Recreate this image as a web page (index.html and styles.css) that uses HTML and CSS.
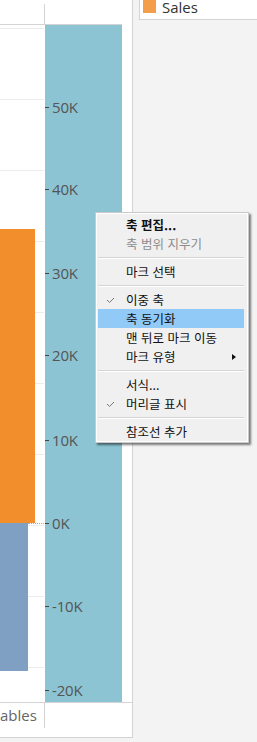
FILE: index.html
```html
<!DOCTYPE html>
<html lang="ko">
<head>
    <meta charset="UTF-8">
    <title>Dual axis sheet</title>
    <link rel="stylesheet" href="styles.css">
</head>
<body>

    <div class="page">
        <!-- worksheet -->
        <div class="sheet">
            <div class="head">
                <div class="head-left"></div>
                <div class="head-right"></div>
            </div>
            <div class="rule-top"></div>

            <div class="plot">
                <div class="pane">
                    <div class="bar bar-sales" style="top: 204px; height: 294px;"></div>
                    <div class="bar bar-profit" style="top: 498px; height: 148px;"></div>
                    <div class="zero-line" style="top: 498px;"></div>
                </div>
                <div class="gap"></div>
                <div class="axis">
                    <div class="tick" style="top: 82px;"><span class="tick-mark"></span>50K</div>
                    <div class="tick" style="top: 164px;"><span class="tick-mark"></span>40K</div>
                    <div class="tick" style="top: 248px;"><span class="tick-mark"></span>30K</div>
                    <div class="tick" style="top: 330px;"><span class="tick-mark"></span>20K</div>
                    <div class="tick" style="top: 415px;"><span class="tick-mark"></span>10K</div>
                    <div class="tick" style="top: 498px;"><span class="tick-mark"></span>0K</div>
                    <div class="tick" style="top: 581px;"><span class="tick-mark"></span>-10K</div>
                    <div class="tick" style="top: 665px;"><span class="tick-mark"></span>-20K</div>
                </div>
            </div>

            <div class="rule-bottom"></div>
            <div class="foot">
                <div class="foot-left">ables</div>
                <div class="foot-right"></div>
            </div>
        </div>

        <!-- legend -->
        <div class="side">
            <div class="legend">
                <span class="swatch"></span>
                <span class="legend-text">Sales</span>
            </div>
        </div>
    </div>

    <!-- context menu -->
    <div class="menu">
        <div class="item bold">축 편집...</div>
        <div class="item disabled">축 범위 지우기</div>
        <div class="sep"></div>
        <div class="item">마크 선택</div>
        <div class="sep"></div>
        <div class="item">
            <svg class="check" width="9" height="7" viewBox="0 0 9 7"><polyline points="1,3 3.5,5.5 8,1" fill="none" stroke="#777" stroke-width="1"/></svg>
            이중 축
        </div>
        <div class="item active">축 동기화</div>
        <div class="item">맨 뒤로 마크 이동</div>
        <div class="item">마크 유형<span class="arrow"></span></div>
        <div class="sep"></div>
        <div class="item">서식...</div>
        <div class="item">
            <svg class="check" width="9" height="7" viewBox="0 0 9 7"><polyline points="1,3 3.5,5.5 8,1" fill="none" stroke="#777" stroke-width="1"/></svg>
            머리글 표시
        </div>
        <div class="sep"></div>
        <div class="item">참조선 추가</div>
    </div>

</body>
</html>
```

FILE: styles.css
```css
body {
    margin: 0;
    background-color: #f3f3f3;
    font-family: "Open Sans", "Noto Sans", sans-serif;
    width: 257px;
    height: 742px;
    overflow: hidden;
    position: relative;
}
.page {
    display: flex;
    align-items: flex-start;
}

/* worksheet */
.sheet {
    width: 132px;
    height: 737px;
    background-color: #fff;
    border-right: 1px solid #d4d4d4;
    border-bottom: 1px solid #d4d4d4;
    flex-shrink: 0;
}
.head {
    height: 24px;
    display: flex;
}
.head-left {
    width: 44px;
}
.head-right {
    margin-top: 4px;
    border-left: 1px solid #d4d4d4;
}
.rule-top {
    width: 122px;
    height: 1px;
    background-color: #d4d4d4;
}
.plot {
    height: 677px;
    display: flex;
}
.pane {
    width: 44px;
    position: relative;
    background: repeating-linear-gradient(to bottom, #ececec 0 1px, transparent 1px 71px);
    background-position: 0 3px;
    overflow: hidden;
}
.bar {
    position: absolute;
    left: 0;
}
.bar-sales {
    width: 35px;
    background-color: #f28e2b;
}
.bar-profit {
    width: 28px;
    background-color: #7f9fc3;
}
.zero-line {
    position: absolute;
    left: 28px;
    right: 0;
    border-top: 1px dotted #a8a8a8;
}
.gap {
    width: 1px;
}
.axis {
    width: 77px;
    position: relative;
    background-color: #8cc4d3;
}
.tick {
    position: absolute;
    left: 0;
    height: 20px;
    margin-top: -10px;
    display: flex;
    align-items: center;
    font-size: 15px;
    color: #555;
    letter-spacing: -0.2px;
}
.tick-mark {
    width: 4px;
    height: 1px;
    background-color: #444;
    margin-right: 3px;
}
.rule-bottom {
    height: 1px;
    background-color: #d4d4d4;
}
.foot {
    height: 25px;
    display: flex;
}
.foot-left {
    width: 44px;
    box-sizing: border-box;
    padding-right: 10px;
    text-align: right;
    font-size: 15px;
    line-height: 25px;
    color: #666;
    overflow: hidden;
    white-space: nowrap;
}
.foot-right {
    border-left: 1px solid #d4d4d4;
}

/* legend */
.side {
    flex: 1;
    padding-left: 6px;
}
.legend {
    height: 19px;
    background-color: #fff;
    border-left: 1px solid #d4d4d4;
    border-bottom: 1px solid #d4d4d4;
    display: flex;
    align-items: flex-start;
    padding-left: 3px;
}
.swatch {
    width: 13px;
    height: 13px;
    background-color: #f49d4a;
}
.legend-text {
    margin-left: 6px;
    font-size: 15px;
    line-height: 15px;
    color: #333;
}

/* context menu */
.menu {
    position: absolute;
    left: 95px;
    top: 212px;
    width: 152px;
    box-sizing: content-box;
    padding: 2px 0 1px;
    background-color: #f0f0f0;
    border: 1px solid #c9c9c9;
    box-shadow: inset 1px 1px 0 #fff, inset -1px -1px 0 #fff, 2px 2px 2px rgba(0, 0, 0, 0.5);
    font-family: "Noto Sans CJK KR", "Noto Sans", sans-serif;
    font-size: 12.5px;
    color: #111;
}
.item {
    height: 19px;
    line-height: 19px;
    margin: 0 4px 0 2px;
    padding-left: 28px;
    position: relative;
}
.item.bold {
    font-weight: bold;
}
.item.disabled {
    color: #8c8c8c;
}
.item.active {
    background-color: #91c9f7;
}
.check {
    position: absolute;
    left: 8px;
    top: 7px;
}
.arrow {
    position: absolute;
    left: 134px;
    top: 7px;
    border-left: 4px solid #111;
    border-top: 3px solid transparent;
    border-bottom: 3px solid transparent;
}
.sep {
    height: 1px;
    margin: 4px 4px 3px 2px;
    background-color: #d4d4d4;
    border-bottom: 1px solid #fff;
}
```
